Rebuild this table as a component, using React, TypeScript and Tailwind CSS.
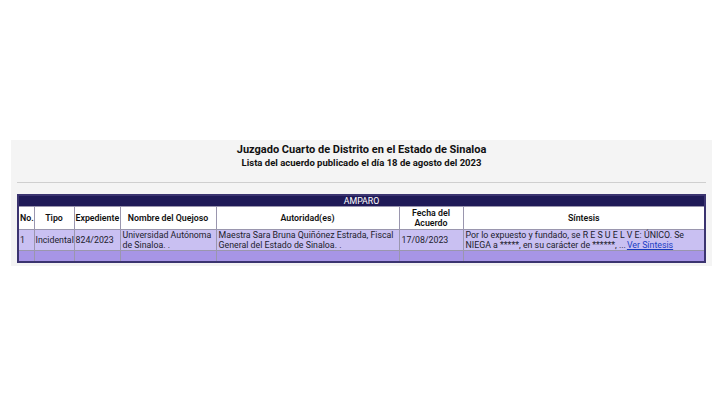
import React from "react";

const cols = [
  { label: "No.", w: "w-[16px]" },
  { label: "Tipo", w: "w-[40px]" },
  { label: "Expediente", w: "w-[46px]" },
  { label: "Nombre del Quejoso", w: "w-[96px]" },
  { label: "Autoridad(es)", w: "w-[183px]" },
  { label: "Fecha del Acuerdo", w: "w-[64px]" },
  { label: "Síntesis", w: "w-[242px]" },
];

export default function App() {
  return (
    <div className="w-[720px] h-[405px] bg-white pt-[140px] font-['Roboto',sans-serif] text-[#222]">
      <div className="ml-[11px] w-[698px] h-[126px] flex">
        <div className="flex-1 bg-[#f4f4f4] px-[6px] pt-[3px]">
          <h1 className="text-center text-[11px] font-bold leading-[13px] text-[#111]">
            Juzgado Cuarto de Distrito en el Estado de Sinaloa
          </h1>
          <h2 className="text-center text-[9.5px] font-bold leading-[12px] mt-[1px] text-[#111]">
            Lista del acuerdo publicado el día 18 de agosto del 2023
          </h2>
          <hr className="mt-[13px] border-t border-[#cfcfcf]" />
          <table className="mt-[11px] w-[687px] border-collapse table-fixed text-[8.8px] leading-[10px] border-2 border-[#3b3470]">
            <colgroup>
              {cols.map((c) => (
                <col key={c.label} className={c.w} />
              ))}
            </colgroup>
            <thead>
              <tr>
                <th colSpan={7} className="bg-[#1f1a57] text-white font-normal h-[10px] text-center">
                  AMPARO
                </th>
              </tr>
              <tr className="bg-white">
                {cols.map((c) => (
                  <th
                    key={c.label}
                    className="h-[23px] border border-[#9a96ae] font-semibold text-center px-[1px] text-[#111] whitespace-nowrap"
                  >
                    {c.label === "Fecha del Acuerdo" ? (
                      <>
                        Fecha del
                        <br />
                        Acuerdo
                      </>
                    ) : (
                      c.label
                    )}
                  </th>
                ))}
              </tr>
            </thead>
            <tbody>
              <tr className="bg-[#c9c0f2] align-middle text-[#1c1c2c]">
                <td className="h-[21px] border border-[#9a96ae] px-[1px]">1</td>
                <td className="border border-[#9a96ae] px-[1px] whitespace-nowrap">Incidental</td>
                <td className="border border-[#9a96ae] px-[1px]">824/2023</td>
                <td className="border border-[#9a96ae] px-[2px]">Universidad Autónoma de Sinaloa. .</td>
                <td className="border border-[#9a96ae] px-[2px]">
                  Maestra Sara Bruna Quiñónez Estrada, Fiscal General del Estado de Sinaloa. .
                </td>
                <td className="border border-[#9a96ae] px-[2px]">17/08/2023</td>
                <td className="border border-[#9a96ae] px-[2px]">
                  Por lo expuesto y fundado, se R E S U E L V E: ÚNICO. Se NIEGA a *****, en su carácter de ******, ...
                  <a href="#" className="ml-[1px] text-[#1a3cc4] underline">
                    Ver Síntesis
                  </a>
                </td>
              </tr>
              <tr className="bg-[#a795e6]">
                {cols.map((c) => (
                  <td key={c.label} className="h-[11px] border border-[#9a96ae]" />
                ))}
              </tr>
            </tbody>
          </table>
        </div>
        <div className="w-[3px] bg-[#c6c6c6]" />
      </div>
    </div>
  );
}
